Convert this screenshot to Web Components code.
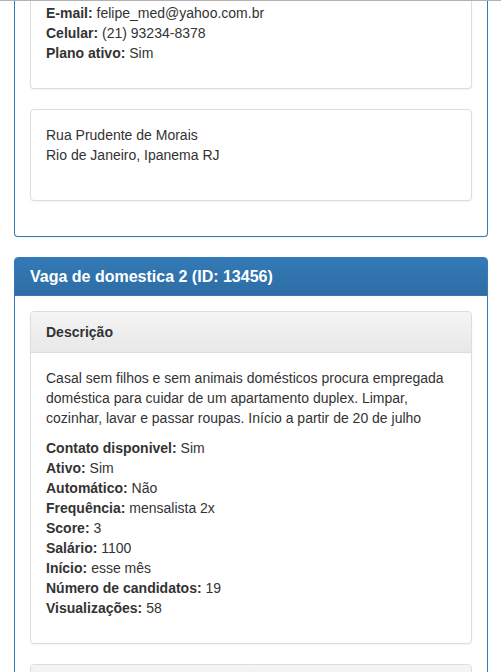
<!DOCTYPE html>
<html lang="pt-BR">
<head>
<meta charset="utf-8">
<title>Vagas</title>
<style>
html, body { margin: 0; height: 100%; }
body { overflow: hidden; background: #fff; color: #333; font: 14px/20px "Liberation Sans", Arial, sans-serif; }
</style>
</head>
<body>
<job-list>
  <job-panel continued>
    <info-card continued>
      <info-field label="E-mail:">felipe_med@yahoo.com.br</info-field>
      <info-field label="Celular:">(21) 93234-8378</info-field>
      <info-field label="Plano ativo:">Sim</info-field>
    </info-card>
    <info-card>
      <postal-address><span>Rua Prudente de Morais</span><br><span>Rio de Janeiro, Ipanema RJ</span></postal-address>
    </info-card>
  </job-panel>
  <job-panel heading="Vaga de domestica 2 (ID: 13456)">
    <info-card heading="Descrição">
      <text-block>Casal sem filhos e sem animais domésticos procura empregada doméstica para cuidar de um apartamento duplex. Limpar, cozinhar, lavar e passar roupas. Início a partir de 20 de julho</text-block>
      <info-field label="Contato disponivel:">Sim</info-field>
      <info-field label="Ativo:">Sim</info-field>
      <info-field label="Automático:">Não</info-field>
      <info-field label="Frequência:">mensalista 2x</info-field>
      <info-field label="Score:">3</info-field>
      <info-field label="Salário:">1100</info-field>
      <info-field label="Início:">esse mês</info-field>
      <info-field label="Número de candidatos:">19</info-field>
      <info-field label="Visualizações:">58</info-field>
    </info-card>
    <info-card heading=" "></info-card>
  </job-panel>
</job-list>
<script>
const define = (name, html, setup) => customElements.define(name, class extends HTMLElement {
  connectedCallback() {
    if (this.shadowRoot) return;
    this.attachShadow({ mode: 'open' }).innerHTML = html;
    if (setup) setup(this, this.shadowRoot);
  }
});

const fillHeading = (host, root) => {
  const header = root.querySelector('header');
  if (host.hasAttribute('heading')) root.querySelector('h3').textContent = host.getAttribute('heading');
  else header.remove();
};

define('job-list', `
  <style>
    :host { display: block; box-sizing: border-box; height: 100%; overflow: hidden; border-top: 1px solid #b3b1b1; padding: 0 13px 0 14px; }
  </style>
  <slot></slot>`);

define('job-panel', `
  <style>
    :host { display: block; margin-bottom: 20px; border: 1px solid #337ab7; border-radius: 4px; background: #fff; box-shadow: 0 1px 2px rgba(0,0,0,.05); }
    :host([continued]) { border-top: 0; border-radius: 0 0 4px 4px; }
    header { padding: 10px 15px; border-bottom: 1px solid #337ab7; border-radius: 3px 3px 0 0; background: #337ab7 linear-gradient(#337ab7, #2e6da4); color: #fff; }
    h3 { margin: 0; font-size: 16px; line-height: 17px; }
    .body { padding: 15px; }
    :host([continued]) .body { padding-top: 0; }
  </style>
  <header><h3></h3></header>
  <div class="body"><slot></slot></div>`, fillHeading);

define('info-card', `
  <style>
    :host { display: block; margin-bottom: 20px; border: 1px solid #ddd; border-radius: 4px; background: #fff; box-shadow: 0 1px 2px rgba(0,0,0,.05); }
    :host([continued]) { border-top: 0; border-radius: 0 0 4px 4px; }
    header { padding: 10px 15px; border-bottom: 1px solid #ddd; border-radius: 3px 3px 0 0; background: linear-gradient(#f5f5f5, #e8e8e8); }
    h3 { margin: 0; min-height: 20px; font-size: 14px; line-height: 20px; }
    .body { padding: 15px 15px 25px; }
    :host([continued]) .body { padding-top: 2px; }
  </style>
  <header><h3></h3></header>
  <div class="body"><slot></slot></div>`, fillHeading);

define('text-block', `
  <style>:host { display: block; } p { margin: 0 0 10px; }</style>
  <p><slot></slot></p>`);

define('postal-address', `
  <style>:host { display: block; } address { margin-bottom: 10px; font-style: normal; }</style>
  <address><slot></slot></address>`);

define('info-field', `
  <style>:host { display: block; }</style>
  <strong></strong> <slot></slot>`, (host, root) => {
  root.querySelector('strong').textContent = host.getAttribute('label');
});
</script>
</body>
</html>
